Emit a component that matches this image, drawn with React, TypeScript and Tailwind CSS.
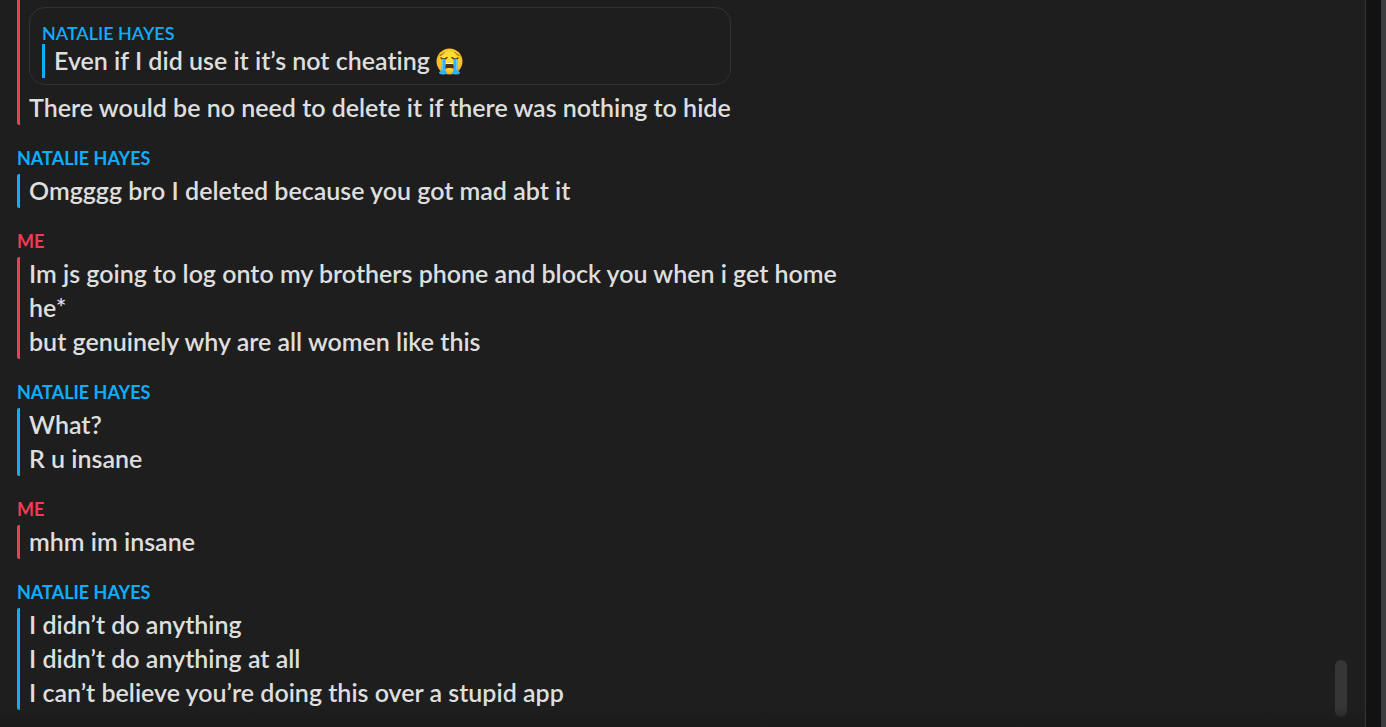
type Sender = "them" | "me";

type Group = {
  id: number;
  sender: Sender;
  lines: string[];
};

const NAMES: Record<Sender, string> = {
  them: "Natalie Hayes",
  me: "Me",
};

const TEXT_COLOR: Record<Sender, string> = {
  them: "text-[#0fadff]",
  me: "text-[#f23c57]",
};

const BAR_COLOR: Record<Sender, string> = {
  them: "border-[#0fadff]",
  me: "border-[#f23c57]",
};

const groups: Group[] = [
  {
    id: 1,
    sender: "them",
    lines: ["Omgggg bro I deleted because you got mad abt it"],
  },
  {
    id: 2,
    sender: "me",
    lines: [
      "Im js going to log onto my brothers phone and block you when i get home",
      "he*",
      "but genuinely why are all women like this",
    ],
  },
  { id: 3, sender: "them", lines: ["What?", "R u insane"] },
  { id: 4, sender: "me", lines: ["mhm im insane"] },
  {
    id: 5,
    sender: "them",
    lines: [
      "I didn’t do anything",
      "I didn’t do anything at all",
      "I can’t believe you’re doing this over a stupid app",
    ],
  },
];

export default function App() {
  return (
    <div className="flex h-screen overflow-hidden bg-[#121212] font-['Lato','Liberation_Sans',sans-serif] text-[#dedede] [font-variant-ligatures:none]">
      <main className="relative flex flex-1 justify-between border-r border-[#333333] bg-[#1e1e1e]">
        <div className="flex-1 pl-[17px]">
          <section className="w-fit rounded-b-xs border-l-3 border-[#f23c57] pt-[7px] pl-[9px]">
            <Quote />
            <Line text="There would be no need to delete it if there was nothing to hide" />
          </section>
          {groups.map((g) => (
            <MessageGroup key={g.id} group={g} />
          ))}
        </div>

        <div className="flex items-end pr-[18px] pb-[10px]">
          <div className="h-[57px] w-3 rounded-full bg-[#363636]" />
        </div>

        <div className="pointer-events-none absolute inset-x-0 bottom-0 h-5 bg-linear-to-t from-[#1a1a1a] to-transparent" />
      </main>
      <div className="w-5 border-r-5 border-[#3c3c3f] bg-[#121212]" />
    </div>
  );
}

function MessageGroup({ group }: { group: Group }) {
  return (
    <section className="pt-[23px]">
      <h2
        className={`mb-1.5 text-[18px] leading-5 font-bold uppercase ${TEXT_COLOR[group.sender]}`}
      >
        {NAMES[group.sender]}
      </h2>
      <div
        className={`rounded-xs border-l-3 pl-[9px] ${BAR_COLOR[group.sender]}`}
      >
        {group.lines.map((l) => (
          <Line key={l} text={l} />
        ))}
      </div>
    </section>
  );
}

function Line({ text }: { text: string }) {
  return (
    <p className="pb-0.5 text-[25px] leading-8 font-semibold">{text}</p>
  );
}

function Quote() {
  return (
    <blockquote className="mb-1.5 rounded-2xl border border-[#333333] px-3 pt-[15px] pb-1.5">
      <h2 className="mb-px text-[18px] leading-5 font-semibold text-[#0fadff] uppercase">
        {NAMES.them}
      </h2>
      <div className="flex items-center gap-1.5 border-l-3 border-[#0fadff] pl-[9px]">
        <Line text="Even if I did use it it’s not cheating" />
        <SobbingFace />
      </div>
    </blockquote>
  );
}

function SobbingFace() {
  return (
    <svg
      viewBox="0 0 54 54"
      className="size-[27px] shrink-0"
      role="img"
      aria-label="Loudly crying face"
    >
      <defs>
        <radialGradient id="face" cx="50%" cy="45%" r="54%">
          <stop offset="50%" stopColor="#fde030" />
          <stop offset="90%" stopColor="#f9b825" />
          <stop offset="100%" stopColor="#f2a01e" />
        </radialGradient>
      </defs>
      <circle cx="27" cy="27" r="26" fill="url(#face)" />
      <path
        d="M8 15c3-1 6-3 8-6M46 15c-3-1-6-3-8-6"
        fill="none"
        stroke="#8a5a14"
        strokeWidth="2"
        strokeLinecap="round"
      />
      <path
        d="M10 20c3 3 9 3 12-1M44 20c-3 3-9 3-12-1"
        fill="none"
        stroke="#5b3a0c"
        strokeWidth="3"
        strokeLinecap="round"
      />
      <path d="M17 42c0-9 4-13 10-13s10 4 10 13c-4-3-16-3-20 0z" fill="#5a3208" />
      <path d="M19 32c2-4 14-4 16 0z" fill="#fff" />
      <path
        d="M11 22h8v22c0 3 3 3 3 5 0 3-4 4-8 4s-8-1-8-4 5-2 5-5z"
        fill="#34b0f6"
      />
      <path
        d="M43 22h-8v22c0 3-3 3-3 5 0 3 4 4 8 4s8-1 8-4-5-2-5-5z"
        fill="#34b0f6"
      />
      <path
        d="M13 24v19M41 24v19"
        stroke="#6ccbff"
        strokeWidth="2"
        strokeLinecap="round"
      />
    </svg>
  );
}
